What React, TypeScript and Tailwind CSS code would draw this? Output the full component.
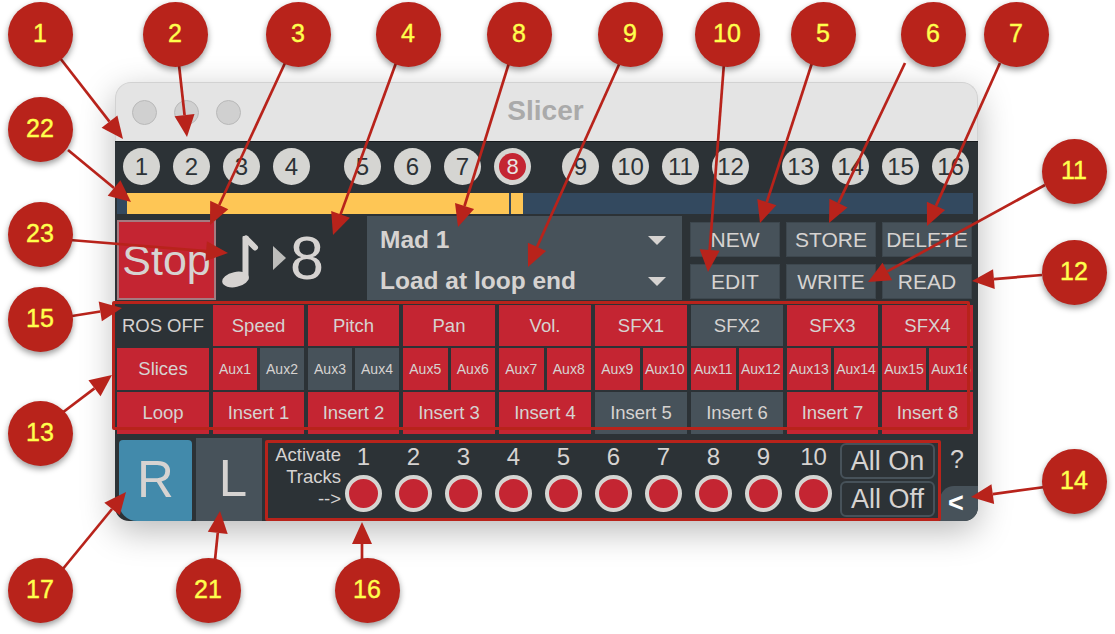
const RED = "bg-[#c42532]";
const SLATE = "bg-[#47525a]";

const trackGroups = [
  { items: [1, 2, 3, 4], cls: "mr-[34px]" },
  { items: [5, 6, 7, 8], cls: "mr-[31px]" },
  { items: [9, 10, 11, 12], cls: "mr-[33px]" },
  { items: [13, 14, 15, 16], cls: "" },
];

const topRow: [string, boolean][] = [
  ["Speed", true],
  ["Pitch", true],
  ["Pan", true],
  ["Vol.", true],
  ["SFX1", true],
  ["SFX2", false],
  ["SFX3", true],
  ["SFX4", true],
];

const auxOff = [2, 3, 4];
const insertOff = [5, 6];

const callouts = [
  { n: "1", x: 40, y: 34 },
  { n: "2", x: 175, y: 34 },
  { n: "3", x: 298, y: 34 },
  { n: "4", x: 408, y: 34 },
  { n: "8", x: 519, y: 34 },
  { n: "9", x: 630, y: 34 },
  { n: "10", x: 727, y: 34 },
  { n: "5", x: 823, y: 34 },
  { n: "6", x: 933, y: 34 },
  { n: "7", x: 1016, y: 34 },
  { n: "22", x: 40, y: 129 },
  { n: "23", x: 40, y: 234 },
  { n: "15", x: 40, y: 319 },
  { n: "13", x: 40, y: 433 },
  { n: "11", x: 1074, y: 171 },
  { n: "12", x: 1074, y: 272 },
  { n: "14", x: 1074, y: 481 },
  { n: "17", x: 40, y: 590 },
  { n: "21", x: 208, y: 590 },
  { n: "16", x: 367, y: 590 },
];

// from -> tip of every annotation arrow
const arrows = [
  [60, 58, 123, 139],
  [179, 65, 187, 137],
  [285, 63, 210, 225],
  [396, 63, 333, 235],
  [509, 63, 458, 227],
  [621, 60, 528, 267],
  [724, 63, 708, 272],
  [812, 63, 760, 223],
  [905, 63, 829, 223],
  [1000, 63, 927, 226],
  [1045, 185, 868, 282],
  [1042, 275, 972, 281],
  [1045, 487, 971, 497],
  [68, 150, 131, 202],
  [70, 240, 228, 253],
  [72, 316, 122, 308],
  [62, 413, 112, 375],
  [62, 570, 126, 492],
  [215, 560, 220, 511],
  [362, 560, 362, 522],
];

function Arrow({ a }: { a: number[] }) {
  const [x1, y1, x2, y2] = a;
  const len = Math.hypot(x2 - x1, y2 - y1);
  const ux = (x2 - x1) / len;
  const uy = (y2 - y1) / len;
  const bx = x2 - ux * 22;
  const by = y2 - uy * 22;
  const pts = [
    `${x2},${y2}`,
    `${bx - uy * 10},${by + ux * 10}`,
    `${bx + uy * 10},${by - ux * 10}`,
  ].join(" ");
  return (
    <g>
      <line x1={x1} y1={y1} x2={bx} y2={by} stroke="#b8231b" strokeWidth="2.7" />
      <polygon points={pts} fill="#b8231b" />
    </g>
  );
}

function TrackDot({ n }: { n: number }) {
  if (n === 8) {
    return (
      <div className="w-[37px] h-[37px] rounded-full bg-[#d5d5d2] flex items-center justify-center">
        <div className="w-[27px] h-[27px] rounded-full bg-[#c42532] flex items-center justify-center text-[22px] text-[#e8e4e2]">
          8
        </div>
      </div>
    );
  }
  return (
    <div className="w-[37px] h-[37px] rounded-full bg-[#d5d5d2] flex items-center justify-center text-[24px] text-[#2c3236]">
      {n}
    </div>
  );
}

function HeadButton({ label }: { label: string }) {
  return (
    <div className="w-[90px] h-[35px] bg-[#47525a] border border-[#3d474e] flex items-center justify-center text-[21px] text-[#d6d3d1]">
      {label}
    </div>
  );
}

function Cell({ label, on }: { label: string; on: boolean }) {
  return (
    <div className={`flex items-center justify-center ${on ? RED : SLATE}`}>{label}</div>
  );
}

function Dropdown() {
  return <div className="w-0 h-0 border-l-[9px] border-r-[9px] border-t-[9px] border-l-transparent border-r-transparent border-t-[#d6d3d1]" />;
}

export default function App() {
  return (
    <div className="relative w-[1115px] h-[634px] bg-white overflow-hidden font-['Liberation_Sans',Arial,sans-serif]">
      <div className="pt-[82px] pl-[115px]">
        <div className="w-[863px] h-[439px] flex flex-col rounded-t-[16px] rounded-b-[14px] shadow-[0_10px_34px_rgba(0,0,0,0.28)]">
          {/* title bar */}
          <div className="h-[59px] shrink-0 grid grid-cols-[1fr_auto_1fr] items-center px-[16px] bg-[#e4e4e4] border border-b-0 border-[#d2d2d2] rounded-t-[16px]">
            <div className="flex gap-[17px]">
              <div className="w-[25px] h-[25px] rounded-full bg-[#d0d0d0] border border-[#b9b9b9]" />
              <div className="w-[25px] h-[25px] rounded-full bg-[#d0d0d0] border border-[#b9b9b9]" />
              <div className="w-[25px] h-[25px] rounded-full bg-[#d0d0d0] border border-[#b9b9b9]" />
            </div>
            <div className="text-[28px] font-bold text-[#aaaaaa] pr-[2px] pb-[2px]">Slicer</div>
            <div />
          </div>

          {/* panel */}
          <div className="flex-1 flex flex-col bg-[#2c3236] border-t border-[#15191c] rounded-b-[14px] px-[2px]">
            <div className="flex pl-[6px] pt-[6px] h-[51px] shrink-0">
              {trackGroups.map((g) => (
                <div key={g.items[0]} className={`flex gap-[13px] ${g.cls}`}>
                  {g.items.map((n) => (
                    <TrackDot key={n} n={n} />
                  ))}
                </div>
              ))}
            </div>

            {/* loop bar */}
            <div className="flex w-[856px] h-[21px] shrink-0 bg-[#33495f]">
              <div className="w-[10px]" />
              <div className="w-[382px] bg-[#fec655]" />
              <div className="w-[2px]" />
              <div className="w-[12px] bg-[#fec655]" />
            </div>

            {/* transport, preset, buttons */}
            <div className="flex h-[86px] shrink-0 pt-[2px]">
              <div className="w-[99px] h-[80px] mt-[4px] bg-[#c42532] border-2 border-[#a57a80] flex items-center justify-center text-[43px] text-[#d6d3d1]">
                Stop
              </div>
              <div className="w-[151px] h-[84px] flex items-center text-[#d6d3d1]">
                <svg width="38" height="53" viewBox="0 0 38 53" className="ml-[6px] mt-[7px]" fill="#d6d3d1">
                  <ellipse cx="13.5" cy="44.5" rx="13.5" ry="7.5" transform="rotate(-12 13.5 44.5)" />
                  <rect x="20.5" y="1" width="6" height="44" rx="1" />
                  <path d="M24 3.5 33 12.5" fill="none" stroke="#d6d3d1" strokeWidth="6" strokeLinecap="round" />
                </svg>
                <div className="ml-[13px] w-0 h-0 border-y-[12px] border-l-[13px] border-y-transparent border-l-[#bdbdbb]" />
                <div className="ml-[4px] text-[61px] leading-none">8</div>
              </div>
              <div className={`w-[315px] h-[84px] ${SLATE} pl-[13px] pr-[16px] pt-[5px] flex flex-col justify-center gap-[9px] text-[24.5px] font-bold text-[#d6d3d1]`}>
                <div className="flex items-center justify-between h-[32px]">
                  Mad 1
                  <Dropdown />
                </div>
                <div className="flex items-center justify-between h-[32px]">
                  Load at loop end
                  <Dropdown />
                </div>
              </div>
              <div className="ml-[8px] pt-[6px] grid grid-cols-[90px_90px_90px] auto-rows-[35px] gap-x-[6px] gap-y-[7px]">
                {["NEW", "STORE", "DELETE", "EDIT", "WRITE", "READ"].map((b) => (
                  <HeadButton key={b} label={b} />
                ))}
              </div>
            </div>

            {/* routing grid */}
            <div className="mt-[5px] w-[856px] shrink-0 grid grid-cols-[92px_91px_91px_92px_92px_92px_92px_91px_91px] grid-rows-[41px_42px_42px] gap-x-[4px] gap-y-[2px] text-[18.5px] text-[#d6d3d1]">
              <div className="flex items-center justify-center">ROS OFF</div>
              {topRow.map(([label, on]) => (
                <Cell key={label} label={label} on={on} />
              ))}
              <Cell label="Slices" on />
              {[0, 1, 2, 3, 4, 5, 6, 7].map((i) => {
                const a = i * 2 + 1;
                const b = i * 2 + 2;
                return (
                  <div key={i} className="grid grid-cols-2 gap-[3px] text-[14px]">
                    <div className={`flex items-center justify-center whitespace-nowrap overflow-hidden ${auxOff.includes(a) ? SLATE : RED}`}>Aux{a}</div>
                    <div className={`flex items-center justify-center whitespace-nowrap overflow-hidden ${auxOff.includes(b) ? SLATE : RED}`}>Aux{b}</div>
                  </div>
                );
              })}
              <Cell label="Loop" on />
              {[1, 2, 3, 4, 5, 6, 7, 8].map((n) => (
                <Cell key={n} label={`Insert ${n}`} on={!insertOff.includes(n)} />
              ))}
            </div>

            {/* bottom strip */}
            <div className="flex flex-1 pt-[4px] text-[#d6d3d1]">
              <div className="ml-[2px] mt-[2px] w-[73px] bg-[#428aab] rounded-t-[4px] rounded-bl-[18px] rounded-br-[2px] flex items-center justify-center text-[51px]">
                R
              </div>
              <div className={`ml-[4px] w-[66px] ${SLATE} pl-[8px] flex items-center justify-center text-[51px]`}>L</div>
              <div className="w-[79px] pt-[6px] text-right text-[18.5px] leading-[22px]">
                <div>Activate</div>
                <div>Tracks</div>
                <div>--&gt;</div>
              </div>
              <div className="ml-[4px] pt-[7px] grid grid-cols-[repeat(10,37px)] gap-x-[13px] content-start">
                {[1, 2, 3, 4, 5, 6, 7, 8, 9, 10].map((n) => (
                  <div key={n} className="flex flex-col items-center">
                    <div className="h-[30px] text-[24px] leading-[24px]">{n}</div>
                    <div className="w-[37px] h-[37px] rounded-full bg-[#c42532] border-[4px] border-[#d5d5d2]" />
                  </div>
                ))}
              </div>
              <div className="ml-[8px] pt-[5px] flex flex-col gap-[2px]">
                <div className="w-[95px] h-[36px] border-2 border-[#47525a] rounded-[6px] flex items-center justify-center text-[27px]">All On</div>
                <div className="w-[95px] h-[36px] border-2 border-[#47525a] rounded-[6px] flex items-center justify-center text-[27px]">All Off</div>
              </div>
              <div className="ml-[5px] flex-1 flex flex-col justify-between items-stretch">
                <div className="pt-[6px] text-center text-[25px] leading-[30px] pr-[2px]">?</div>
                <div className="h-[35px] bg-[#47525a] rounded-tl-[14px] rounded-br-[14px] pr-[6px] flex items-center justify-center text-[27px] font-bold text-white -mr-[2px]">
                  &lt;
                </div>
              </div>
            </div>
          </div>
        </div>
      </div>

      {/* annotation frames */}
      <div className="absolute left-[112px] top-[301px] w-[858px] h-[129px] border-[3px] border-[#b8231b] rounded-[2px]" />
      <div className="absolute left-[265px] top-[440px] w-[676px] h-[81px] border-[3px] border-[#b8231b] rounded-[2px]" />

      {/* annotation arrows */}
      <svg className="absolute inset-0" width="1115" height="634" viewBox="0 0 1115 634">
        {arrows.map((a, i) => (
          <Arrow key={i} a={a} />
        ))}
      </svg>

      {/* annotation bubbles */}
      {callouts.map((c) => (
        <div
          key={c.n}
          className="absolute w-[65px] h-[65px] rounded-full bg-[#b8231b] shadow-[0_3px_6px_rgba(0,0,0,0.4)] flex items-center justify-center text-[25px] text-[#ffff4d] [-webkit-text-stroke:0.4px_#ffff4d]"
          style={{ left: c.x - 32.5, top: c.y - 32.5 }}
        >
          {c.n}
        </div>
      ))}
    </div>
  );
}
